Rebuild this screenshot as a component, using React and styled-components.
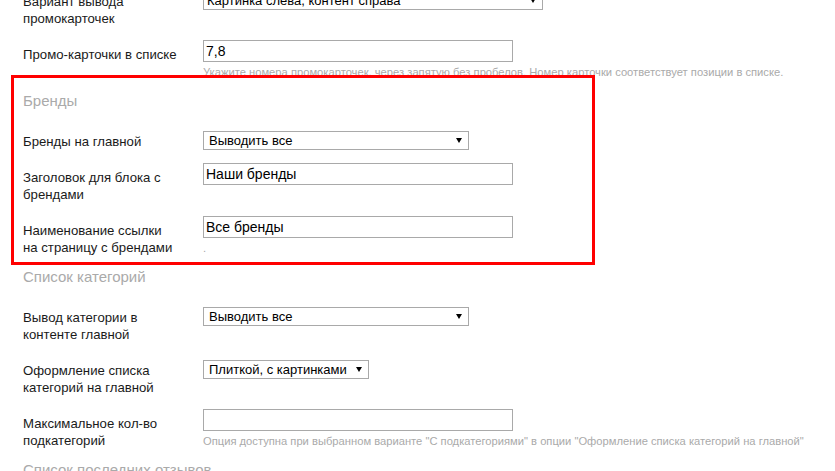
import React from "react";
import styled, { createGlobalStyle } from "styled-components";

const GlobalStyle = createGlobalStyle`
  html, body { margin: 0; padding: 0; background: #fff; }
  body { font-family: "Liberation Sans", Arial, sans-serif; overflow: hidden; }
`;

const Page = styled.div`
  margin-top: -13px;
  padding-left: 23px;
  width: 812px;
`;

const Row = styled.div`
  display: grid;
  grid-template-columns: 160px 1fr;
  column-gap: 20px;
  align-items: start;
  padding-bottom: 13px;
`;

const Label = styled.div`
  width: 155px;
  padding-top: 6px;
  font-size: 13.2px;
  line-height: 17px;
  color: #1a1a1a;
`;

const Control = styled.div`
  display: flex;
  flex-direction: column;
  align-items: flex-start;
`;

const TextInput = styled.input`
  box-sizing: border-box;
  width: 310px;
  height: 22px;
  margin: 0;
  padding: 0 2px;
  border: 1px solid #a9a9a9;
  border-radius: 0;
  outline: none;
  background: #fff;
  font-family: "Liberation Sans", Arial, sans-serif;
  font-size: 14px;
  color: #000;
`;

const SelectBox = styled.div`
  box-sizing: border-box;
  margin-top: 4px;
  width: ${(p) => p.$width}px;
  height: 19px;
  padding: 0 6px 0 ${(p) => p.$padLeft ?? 5}px;
  border: 1px solid #a9a9a9;
  background: #fff;
  display: flex;
  align-items: center;
  justify-content: space-between;
  gap: 8px;
  font-size: 13px;
  line-height: 17px;
  color: #000;
  white-space: nowrap;
`;

const Arrow = styled.span`
  flex: none;
  width: 0;
  height: 0;
  border-left: 3px solid transparent;
  border-right: 3px solid transparent;
  border-top: 5px solid #000;
`;

const Hint = styled.div`
  margin-top: 3px;
  font-size: 11.2px;
  line-height: 15px;
  color: #aaa;
  white-space: nowrap;
`;

const SectionTitle = styled.div`
  margin: -2px 0 16px;
  font-size: 15px;
  line-height: 20px;
  color: #aaa;
`;

const Highlighted = styled.div`
  position: relative;
  &::after {
    content: "";
    position: absolute;
    top: -16px;
    left: -12px;
    width: 584px;
    height: 190px;
    box-sizing: border-box;
    border: 3px solid #f00;
    pointer-events: none;
  }
`;

const Select = ({ width, value, padLeft }) => (
  <SelectBox $width={width} $padLeft={padLeft}>
    <span>{value}</span>
    <Arrow />
  </SelectBox>
);

const Field = ({ label, children }) => (
  <Row>
    <Label>{label}</Label>
    <Control>{children}</Control>
  </Row>
);

export default function App() {
  return (
    <>
      <GlobalStyle />
      <Page>
        <Field label="Вариант вывода промокарточек">
          <Select width={340} value="Картинка слева, контент справа" padLeft={3} />
        </Field>
        <Field label="Промо-карточки в списке">
          <TextInput value="7,8" readOnly />
          <Hint>
            Укажите номера промокарточек, через запятую без пробелов. Номер карточки соответствует позиции в списке.
          </Hint>
        </Field>

        <Highlighted>
          <SectionTitle>Бренды</SectionTitle>
          <Field label="Бренды на главной">
            <Select width={266} value="Выводить все" />
          </Field>
          <Field label="Заголовок для блока с брендами">
            <TextInput value="Наши бренды" readOnly />
          </Field>
          <Field label="Наименование ссылки на страницу с брендами">
            <TextInput value="Все бренды" readOnly />
            <Hint>.</Hint>
          </Field>
        </Highlighted>

        <SectionTitle>Список категорий</SectionTitle>
        <Field label="Вывод категории в контенте главной">
          <Select width={266} value="Выводить все" />
        </Field>
        <Field label="Оформление списка категорий на главной">
          <Select width={166} value="Плиткой, с картинками" />
        </Field>
        <Field label="Максимальное кол-во подкатегорий">
          <TextInput value="" readOnly />
          <Hint>
            Опция доступна при выбранном варианте "С подкатегориями" в опции "Оформление списка категорий на главной"
          </Hint>
        </Field>
        <SectionTitle>Список последних отзывов</SectionTitle>
      </Page>
    </>
  );
}
